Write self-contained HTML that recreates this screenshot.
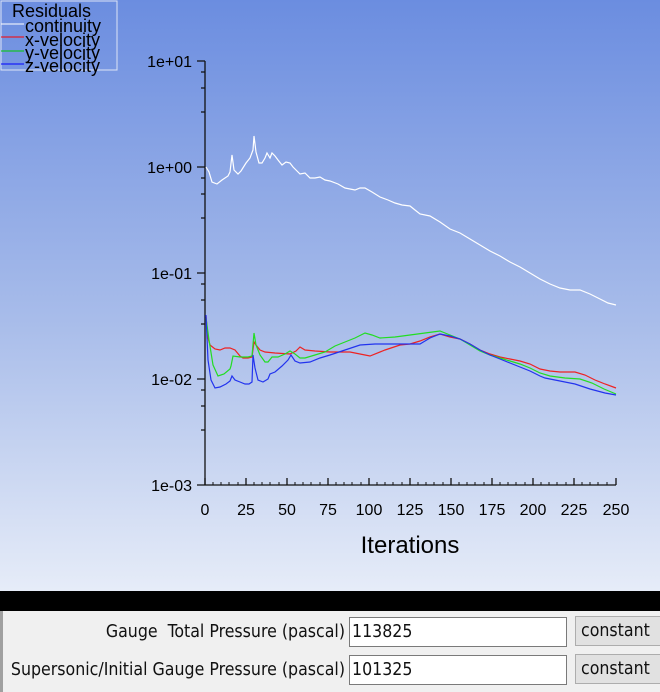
<!DOCTYPE html>
<html><head><style>
body{margin:0;width:660px;height:692px;overflow:hidden;font-family:"Liberation Sans",sans-serif;}
svg text{font-family:"Liberation Sans",Arial,sans-serif;}
.plot{position:absolute;left:0;top:0;width:660px;height:591px;background:linear-gradient(to bottom,#6b8de0 0%,#a9bdea 55%,#e6ecf8 100%);}
.band{position:absolute;left:0;top:591px;width:660px;height:20px;background:#000;}
.panel{position:absolute;left:0;top:611px;width:660px;height:81px;background:#f0f0f0;border-left:3px solid #a0a0a0;box-sizing:border-box;}
.lbl,.inp,.btn{font-family:"DejaVu Sans Condensed","DejaVu Sans",sans-serif;font-stretch:condensed;font-size:17.6px;color:#111;}
.lbl{position:absolute;right:315px;white-space:nowrap;}
.inp{position:absolute;left:346px;width:218px;height:30px;box-sizing:border-box;border:1px solid #7a7a7a;background:#fff;padding:4px 2px;}
.btn{position:absolute;left:572px;width:90px;height:30px;box-sizing:border-box;border:1px solid #adadad;background:#e1e1e1;padding:4px 5px;}
</style></head><body>
<div class="plot">
<svg width="660" height="591" style="position:absolute;left:0;top:0">
<rect x="1" y="1" width="116" height="69" fill="none" stroke="#dde4f6" stroke-width="1"/>
<text x="12" y="17" font-size="18" fill="#000">Residuals</text>
<text x="25" y="32" font-size="18" fill="#000">continuity</text>
<text x="25" y="46" font-size="18" fill="#000">x-velocity</text>
<text x="25" y="59" font-size="18" fill="#000">y-velocity</text>
<text x="25" y="72" font-size="18" fill="#000">z-velocity</text>
<line x1="1" y1="24" x2="24" y2="24" stroke="#fff"/>
<line x1="1" y1="37" x2="24" y2="37" stroke="#f00"/>
<line x1="1" y1="51" x2="24" y2="51" stroke="#0c0"/>
<line x1="1" y1="64" x2="24" y2="64" stroke="#00f"/>
<g stroke="#111" stroke-width="1.3" fill="none">
<line x1="205" y1="61" x2="205" y2="485"/>
<line x1="205" y1="485" x2="616" y2="485"/>
<path d="M197 61h8M197 167h8M197 273h8M197 379h8M197 485h8
M201 72h4M201 88h4M201 112h4M201 178h4M201 194h4M201 218h4M201 284h4M201 300h4M201 324h4M201 390h4M201 406h4M201 430h4"/>
<path d="M205 485v-7M246 485v-7M287 485v-7M328 485v-7M369 485v-7M410 485v-7M451 485v-7M492 485v-7M533 485v-7M574 485v-7M616 485v-7"/>
</g>
<g stroke="#111" stroke-width="1">
<path d="M213 485v-3M221 485v-3M229 485v-3M238 485v-3M254 485v-3M262 485v-3M270 485v-3M279 485v-3M295 485v-3M303 485v-3M311 485v-3M320 485v-3M336 485v-3M344 485v-3M352 485v-3M361 485v-3M377 485v-3M385 485v-3M393 485v-3M402 485v-3M418 485v-3M426 485v-3M434 485v-3M443 485v-3M459 485v-3M467 485v-3M475 485v-3M484 485v-3M500 485v-3M508 485v-3M516 485v-3M525 485v-3M541 485v-3M549 485v-3M557 485v-3M566 485v-3M582 485v-3M590 485v-3M598 485v-3M607 485v-3"/>
</g>
<g font-size="16" fill="#000" text-anchor="end">
<text x="192" y="67">1e+01</text><text x="192" y="173">1e+00</text><text x="192" y="279">1e-01</text><text x="192" y="385">1e-02</text><text x="192" y="491">1e-03</text>
</g>
<g font-size="16" fill="#000" text-anchor="middle">
<text x="205" y="515">0</text><text x="246" y="515">25</text><text x="287" y="515">50</text><text x="328" y="515">75</text><text x="369" y="515">100</text><text x="410" y="515">125</text><text x="451" y="515">150</text><text x="492" y="515">175</text><text x="533" y="515">200</text><text x="574" y="515">225</text><text x="616" y="515">250</text>
</g>
<text x="410" y="553" font-size="24" text-anchor="middle" fill="#000">Iterations</text>
<g fill="none" stroke-width="1.2">
<polyline stroke="#fff" points="206,167 209,172 212,182 217,184 222,180 228,176 230,172 232,155 234,170 238,174 241,171 246,163 250,158 253,150 254,136 256,152 259,163 262,163 265,158 267,153 270,158 272,153 275,156 278,160 282,165 286,162 290,163 293,167 296,170 300,174 305,173 310,178 315,178 320,177 325,180 330,181 338,184 345,188 350,189 355,190 360,188 365,188 372,192 380,197 388,200 395,203 402,205 410,206 415,210 420,214 430,216 440,222 450,229 460,233 470,239 480,245 490,251 500,256 510,262 520,267 530,273 540,279 550,284 560,288 570,290 580,290 590,294 600,299 608,303 616,305"/>
<polyline stroke="#ee2222" points="206,316 208,338 210,345 215,349 220,350 225,348 230,348 235,350 240,356 243,358 248,358 252,357 254,342 256,345 260,350 265,352 275,353 290,354 296,351 300,347 305,350 315,351 330,352 350,352 360,354 370,356 385,350 400,345 410,344 420,341 430,337 440,334 450,337 460,339 470,344 480,350 490,354 500,357 510,359 520,361 530,364 540,369 550,371 560,372 575,372 585,375 595,380 605,384 616,388"/>
<polyline stroke="#22dd22" points="206,318 209,340 213,365 218,376 224,374 230,369 231,366 233,356 240,357 248,357 252,356 254,333 256,345 260,355 265,362 268,362 272,357 278,357 285,354 290,351 295,354 300,358 305,358 315,355 325,352 335,346 345,342 355,338 365,333 372,335 380,338 395,337 410,335 425,333 440,331 450,335 460,339 470,345 480,351 490,355 500,358 510,361 520,364 530,368 540,373 550,376 565,378 580,379 592,383 604,389 616,394"/>
<polyline stroke="#2233ee" points="206,315 208,360 211,380 215,388 220,387 226,384 230,381 232,376 235,380 240,382 245,384 249,384 252,382 253,355 255,368 258,380 263,382 268,379 270,374 275,372 282,366 288,360 291,355 295,361 300,363 310,362 320,358 330,355 345,350 360,345 375,344 390,344 405,344 420,344 430,338 440,334 450,336 460,339 470,344 480,350 490,355 500,359 510,363 520,367 530,371 540,376 545,378 560,381 575,384 590,389 605,393 616,395"/>
</g>
</svg>
</div>
<div class="band"></div>
<div class="panel">
<div class="lbl" style="top:11px">Gauge&nbsp;&nbsp;Total Pressure (pascal)</div>
<div class="lbl" style="top:49px">Supersonic/Initial Gauge Pressure (pascal)</div>
<div class="inp" style="top:6px">113825</div>
<div class="inp" style="top:44px">101325</div>
<div class="btn" style="top:5px">constant</div>
<div class="btn" style="top:43px">constant</div>
</div>
</body></html>
